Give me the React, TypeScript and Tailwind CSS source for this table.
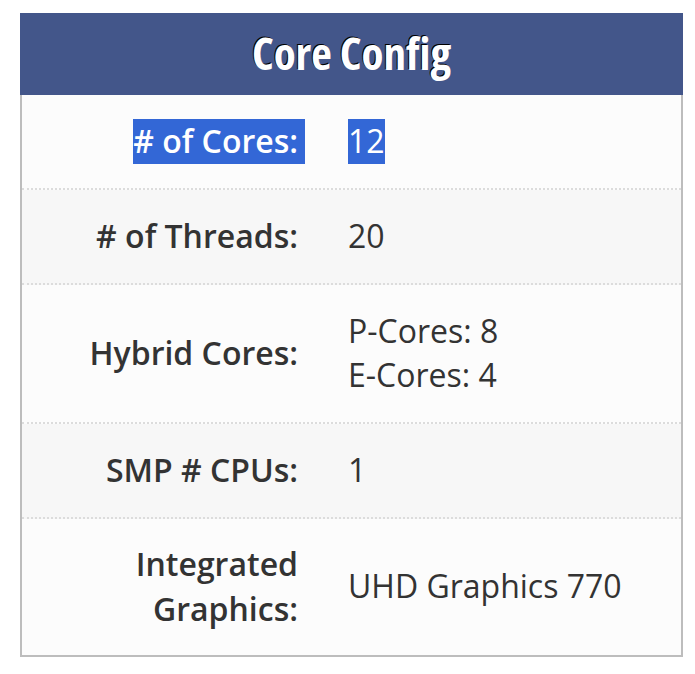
import React from 'react';

type Row = { label: string[]; value: string[]; selected?: boolean };

const rows: Row[] = [
  { label: ['# of Cores:'], value: ['12'], selected: true },
  { label: ['# of Threads:'], value: ['20'] },
  { label: ['Hybrid Cores:'], value: ['P-Cores: 8', 'E-Cores: 4'] },
  { label: ['SMP # CPUs:'], value: ['1'] },
  { label: ['Integrated', 'Graphics:'], value: ['UHD Graphics 770'] },
];

export default function App() {
  return (
    <div
      className="min-h-screen bg-white pt-[13px] pl-[20px]"
      style={{ fontFamily: '"Open Sans", "Noto Sans", sans-serif' }}
    >
      <div className="w-[663px]">
        <div className="h-[82px] bg-[#43568a] flex items-center justify-center">
          <h2 className="text-white text-[45px] font-bold leading-none [font-stretch:condensed] [text-shadow:-1px_-1px_0_#000] pb-[3px]">
            Core Config
          </h2>
        </div>
        <div className="border-x-2 border-b-2 border-[#bdbdbd] bg-[#fcfcfc]">
          {rows.map((row, i) => {
            const last = i === rows.length - 1;
            return (
              <div
                key={i}
                className={
                  'flex items-center text-[32px] leading-[44.8px] text-[#333] ' +
                  (last ? 'py-[23px] ' : 'py-[24px] border-b-2 border-dotted border-[#dcdcdc] ') +
                  (i % 2 === 1 ? 'bg-[#f7f7f7]' : '')
                }
              >
                <div className="w-[301px] pr-[25px] text-right font-semibold">
                  {row.label.map((l, j) =>
                    row.selected ? (
                      <span key={j} className="inline-block bg-[#3367d6] text-white pr-[7px] -mr-[7px]">
                        {l}
                      </span>
                    ) : (
                      <div key={j}>{l}</div>
                    )
                  )}
                </div>
                <div className="pl-[25px]">
                  {row.value.map((v, j) =>
                    row.selected ? (
                      <span key={j} className="inline-block bg-[#3367d6] text-white">
                        {v}
                      </span>
                    ) : (
                      <div key={j}>{v}</div>
                    )
                  )}
                </div>
              </div>
            );
          })}
        </div>
      </div>
    </div>
  );
}
